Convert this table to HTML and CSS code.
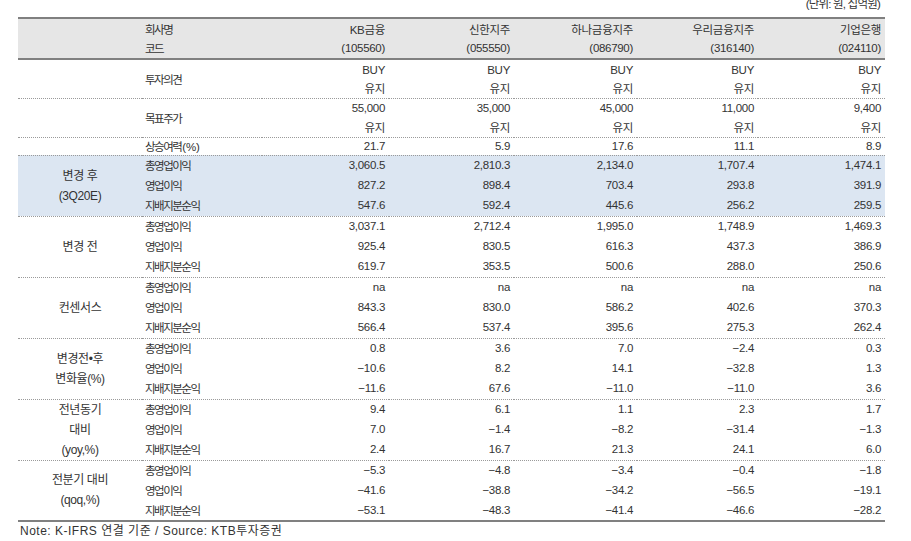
FILE: index.html
```html
<!DOCTYPE html>
<html lang="ko">
<head>
<meta charset="utf-8">
<link rel="stylesheet" href="styles.css">
</head>
<body>
<div class="unit"><span>(단위: 원, 십억원)</span></div>
<table class="tbl">
<colgroup>
<col class="c-grp"><col class="c-item"><col class="c-kb"><col class="c-sh"><col class="c-hn"><col class="c-wr"><col class="c-ibk">
</colgroup>
<thead>
<tr class="h1"><th class="grp"></th><th class="item">회사명</th><th class="num">KB금융</th><th class="num">신한지주</th><th class="num">하나금융지주</th><th class="num">우리금융지주</th><th class="num">기업은행</th></tr>
<tr class="h2"><th class="grp"></th><th class="item">코드</th><th class="num">(105560)</th><th class="num">(055550)</th><th class="num">(086790)</th><th class="num">(316140)</th><th class="num">(024110)</th></tr>
</thead>
<tbody>
<tr class="r20"><td class="grp" rowspan="2"></td><td class="item" rowspan="2">투자의견</td><td class="num">BUY</td><td class="num">BUY</td><td class="num">BUY</td><td class="num">BUY</td><td class="num">BUY</td></tr>
<tr class="r19"><td class="num">유지</td><td class="num">유지</td><td class="num">유지</td><td class="num">유지</td><td class="num">유지</td></tr>
</tbody>
<tbody>
<tr class="r19"><td class="grp" rowspan="2"></td><td class="item" rowspan="2">목표주가</td><td class="num">55,000</td><td class="num">35,000</td><td class="num">45,000</td><td class="num">11,000</td><td class="num">9,400</td></tr>
<tr class="r20"><td class="num">유지</td><td class="num">유지</td><td class="num">유지</td><td class="num">유지</td><td class="num">유지</td></tr>
</tbody>
<tbody>
<tr class="r18"><td class="grp"></td><td class="item">상승여력<span class="lat">(%)</span></td><td class="num">21.7</td><td class="num">5.9</td><td class="num">17.6</td><td class="num">11.1</td><td class="num">8.9</td></tr>
</tbody>
<tbody class="blue">
<tr><td class="grp" rowspan="3">변경 후<br>(3Q20E)</td><td class="item">총영업이익</td><td class="num">3,060.5</td><td class="num">2,810.3</td><td class="num">2,134.0</td><td class="num">1,707.4</td><td class="num">1,474.1</td></tr>
<tr><td class="item">영업이익</td><td class="num">827.2</td><td class="num">898.4</td><td class="num">703.4</td><td class="num">293.8</td><td class="num">391.9</td></tr>
<tr class="end"><td class="item">지배지분순익</td><td class="num">547.6</td><td class="num">592.4</td><td class="num">445.6</td><td class="num">256.2</td><td class="num">259.5</td></tr>
</tbody>
<tbody>
<tr><td class="grp" rowspan="3">변경 전</td><td class="item">총영업이익</td><td class="num">3,037.1</td><td class="num">2,712.4</td><td class="num">1,995.0</td><td class="num">1,748.9</td><td class="num">1,469.3</td></tr>
<tr><td class="item">영업이익</td><td class="num">925.4</td><td class="num">830.5</td><td class="num">616.3</td><td class="num">437.3</td><td class="num">386.9</td></tr>
<tr class="end"><td class="item">지배지분순익</td><td class="num">619.7</td><td class="num">353.5</td><td class="num">500.6</td><td class="num">288.0</td><td class="num">250.6</td></tr>
</tbody>
<tbody>
<tr><td class="grp" rowspan="3">컨센서스</td><td class="item">총영업이익</td><td class="num">na</td><td class="num">na</td><td class="num">na</td><td class="num">na</td><td class="num">na</td></tr>
<tr><td class="item">영업이익</td><td class="num">843.3</td><td class="num">830.0</td><td class="num">586.2</td><td class="num">402.6</td><td class="num">370.3</td></tr>
<tr class="end"><td class="item">지배지분순익</td><td class="num">566.4</td><td class="num">537.4</td><td class="num">395.6</td><td class="num">275.3</td><td class="num">262.4</td></tr>
</tbody>
<tbody>
<tr><td class="grp" rowspan="3">변경전•후<br>변화율(%)</td><td class="item">총영업이익</td><td class="num">0.8</td><td class="num">3.6</td><td class="num">7.0</td><td class="num">−2.4</td><td class="num">0.3</td></tr>
<tr><td class="item">영업이익</td><td class="num">−10.6</td><td class="num">8.2</td><td class="num">14.1</td><td class="num">−32.8</td><td class="num">1.3</td></tr>
<tr class="end"><td class="item">지배지분순익</td><td class="num">−11.6</td><td class="num">67.6</td><td class="num">−11.0</td><td class="num">−11.0</td><td class="num">3.6</td></tr>
</tbody>
<tbody>
<tr><td class="grp" rowspan="3">전년동기<br>대비<br>(yoy,%)</td><td class="item">총영업이익</td><td class="num">9.4</td><td class="num">6.1</td><td class="num">1.1</td><td class="num">2.3</td><td class="num">1.7</td></tr>
<tr><td class="item">영업이익</td><td class="num">7.0</td><td class="num">−1.4</td><td class="num">−8.2</td><td class="num">−31.4</td><td class="num">−1.3</td></tr>
<tr class="end"><td class="item">지배지분순익</td><td class="num">2.4</td><td class="num">16.7</td><td class="num">21.3</td><td class="num">24.1</td><td class="num">6.0</td></tr>
</tbody>
<tbody class="last">
<tr><td class="grp" rowspan="3">전분기 대비<br>(qoq,%)</td><td class="item">총영업이익</td><td class="num">−5.3</td><td class="num">−4.8</td><td class="num">−3.4</td><td class="num">−0.4</td><td class="num">−1.8</td></tr>
<tr><td class="item">영업이익</td><td class="num">−41.6</td><td class="num">−38.8</td><td class="num">−34.2</td><td class="num">−56.5</td><td class="num">−19.1</td></tr>
<tr class="end"><td class="item">지배지분순익</td><td class="num">−53.1</td><td class="num">−48.3</td><td class="num">−41.4</td><td class="num">−46.6</td><td class="num">−28.2</td></tr>
</tbody>
</table>
<p class="note">Note: K-IFRS 연결 기준 / Source: KTB투자증권</p>
</body>
</html>
```

FILE: styles.css
```css
html, body {
  margin: 0;
  padding: 0;
  background: #ffffff;
}
body {
  color: #333333;
  font-family: "Liberation Sans", "Noto Sans CJK KR", sans-serif;
}
.unit {
  height: 17px;
  overflow: hidden;
  text-align: right;
  padding-right: 31px;
  font-size: 11.5px;
  letter-spacing: -0.8px;
}
.unit span {
  display: block;
  line-height: 12px;
  margin-top: -2px;
}
.tbl {
  margin-left: 18px;
  border-collapse: collapse;
  table-layout: fixed;
  width: 867px;
  font-size: 11.5px;
  letter-spacing: -0.3px;
}
.c-grp { width: 124px; }
.c-item { width: 120px; }
.c-kb { width: 127px; }
.c-sh { width: 125px; }
.c-hn { width: 123px; }
.c-wr { width: 121px; }
.c-ibk { width: 127px; }
.tbl th, .tbl td {
  padding: 0;
  font-weight: normal;
  white-space: nowrap;
  vertical-align: middle;
}
.tbl thead {
  background: #e6e6e6;
  border-top: 2px solid #808080;
  border-bottom: 2px solid #808080;
}
.tbl thead tr.h1 { height: 20px; }
.tbl thead tr.h2 { height: 21px; }
.tbl tbody tr { height: 20px; }
.tbl tbody tr.end { height: 21px; }
.tbl tbody tr.r18 { height: 18px; }
.tbl tbody tr.r19 { height: 19px; }
.tbl tbody tr.r20 { height: 20px; }
.tbl tbody { border-bottom: 1px dotted #9a9a9a; }
.tbl tbody.last { border-bottom: 2px solid #808080; }
.tbl tbody.blue { background: #dce6f2; }
.tbl .num {
  text-align: right;
  padding-right: 4px;
}
.tbl .item {
  text-align: left;
  padding-left: 3px;
  font-size: 11.5px;
  letter-spacing: -1.5px;
}
.tbl .item .lat {
  letter-spacing: -0.2px;
  margin-left: 1px;
}
.tbl .grp {
  text-align: center;
  font-size: 12px;
  letter-spacing: -0.4px;
  line-height: 20px;
}
.note {
  margin: 0 0 0 20px;
  font-size: 12px;
  letter-spacing: 0.5px;
  line-height: 18px;
}
```
